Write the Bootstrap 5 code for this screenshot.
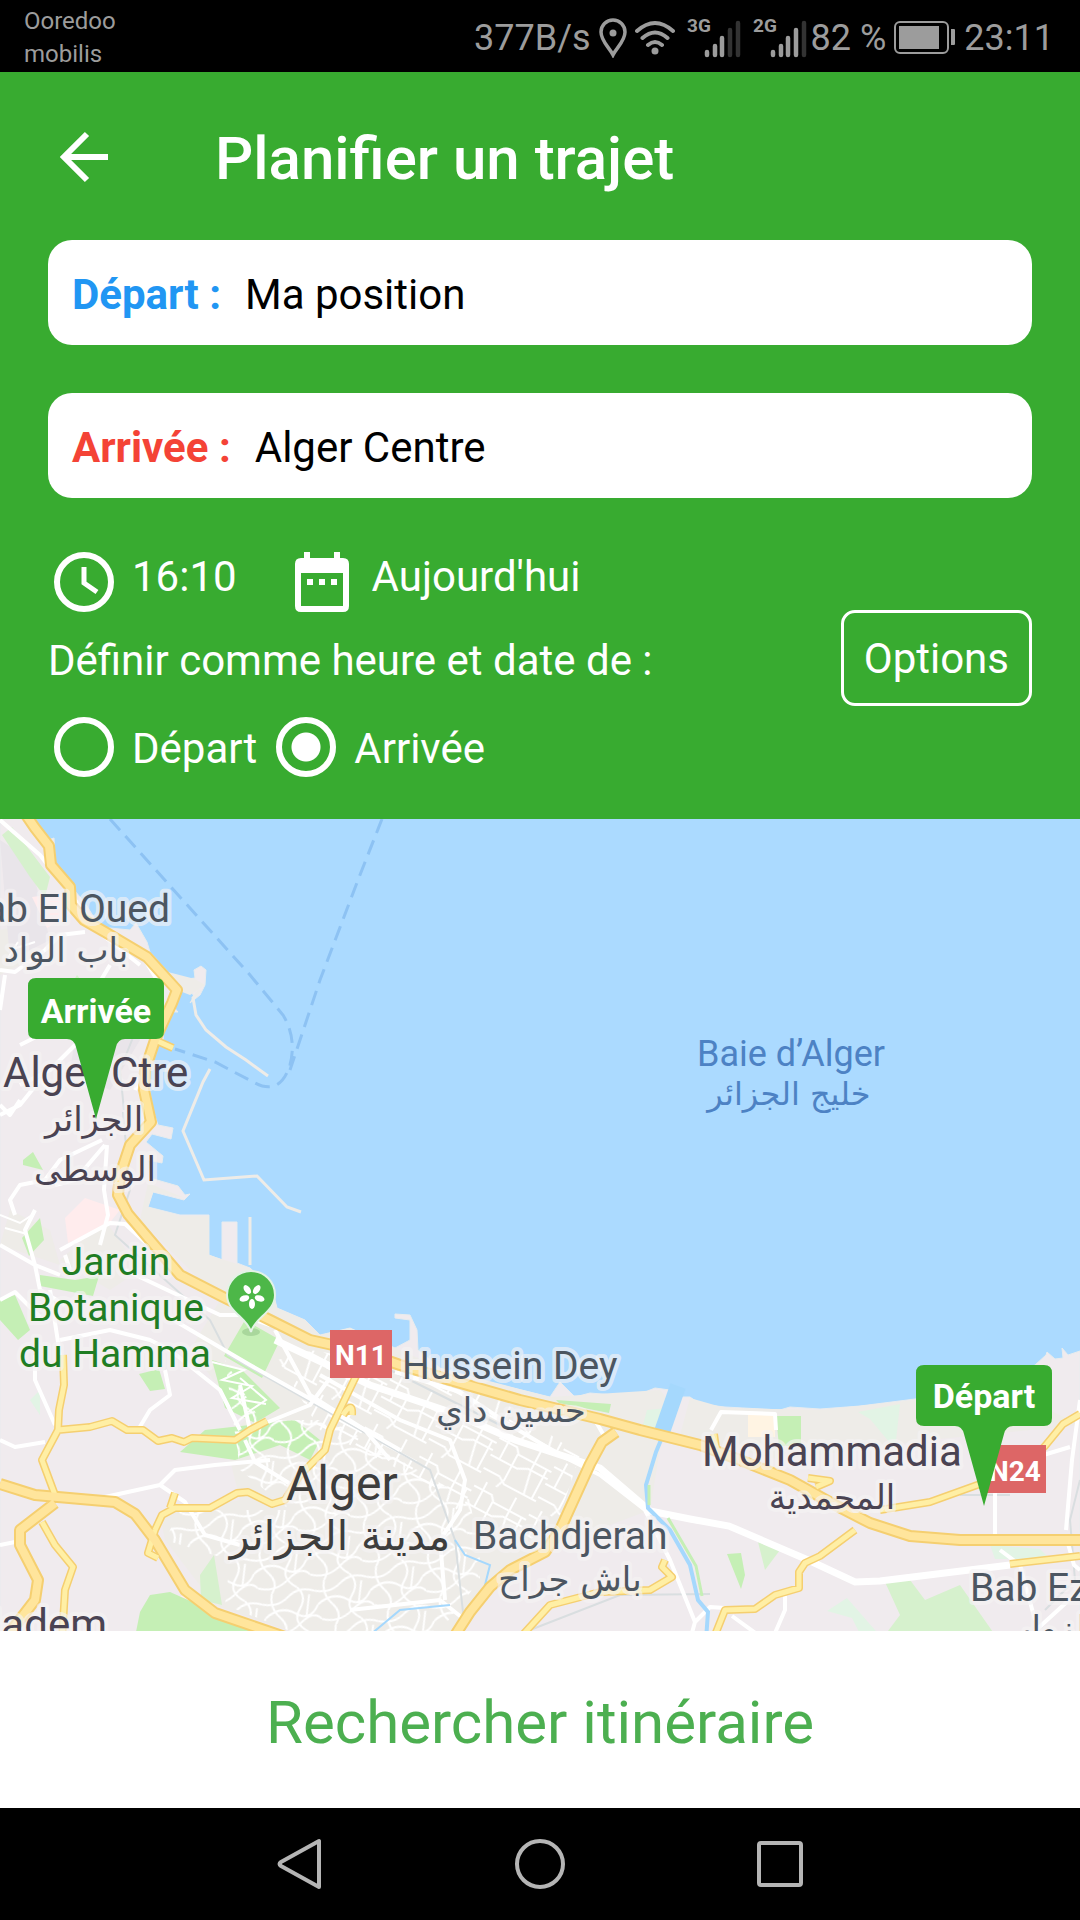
<!DOCTYPE html>
<html lang="fr">
<head>
<meta charset="utf-8">
<meta name="viewport" content="width=device-width, initial-scale=1">
<title>Planifier un trajet</title>
<link rel="stylesheet" href="https://cdn.jsdelivr.net/npm/bootstrap@5.3.0/dist/css/bootstrap.min.css">
<style>
  :root { --app-green: #38ab30; }
  body { font-family: Roboto, "Noto Sans", sans-serif; font-size: 42px; line-height: 48px; background: #000; }
  svg { display: block; flex: none; }
  .status-bar { height: 72px; color: #9c9c9c; font-size: 36px; padding: 3px 26px 0 24px; }
  .carriers { font-size: 24px; line-height: 33px; }
  .status-icons { gap: 4px; }
  .net-type { font-size: 19px; font-weight: 700; fill: #9c9c9c; }
  .planner { background: var(--app-green); padding: 48px 48px 42px; }
  .page-title { font-size: 60px; line-height: 72px; font-weight: 500; padding-top: 3px; }
  .title-row { gap: 102px; margin-bottom: 45px; padding-left: 5px; }
  .place-field { height: 105px; border-radius: 24px; padding: 5px 24px 0; gap: 24px; margin-bottom: 48px; }
  .place-field label { font-weight: 700; }
  .place-field input { outline: 0; color: #000; }
  .from-label { color: #2196f3; }
  .to-label { color: #f44336; }
  .when-row { gap: 53px; height: 72px; }
  .when-btn, .when-btn:hover { font-size: 42px; line-height: 48px; color: #fff; gap: 12px; }
  .when-btn span { padding-bottom: 10px; }
  .date-btn { gap: 18px; }
  .set-as { height: 88px; padding-bottom: 2px; }
  .mode-row { gap: 19px; padding: 11px 0 0 6px; }
  .pick { gap: 18px; }
  .pick label { padding-top: 3px; }
  .pick input { appearance: none; width: 60px; height: 60px; margin: 0; border: 6px solid #fff; border-radius: 50%; }
  .pick input:checked { background: radial-gradient(circle, #fff 14px, transparent 15px); }
  .options-btn, .options-btn:hover { border: 3px solid #fff; border-radius: 14px; margin-top: 64px; padding: 22px 20px 20px; font-size: 42px; line-height: 48px; color: #fff; }
  .map-pane { min-height: 500px; }
  .map-pane > svg { position: absolute; width: 100%; height: 100%; }
  .lbl { font-size: 39px; fill: #4c5661; stroke: #f5f3f4; stroke-opacity: .65; stroke-width: 8px; stroke-linejoin: round; paint-order: stroke; }
  .big-lbl { font-size: 42px; }
  .lbl .ar { font-family: "DejaVu Sans", sans-serif; font-size: 34px; }
  .town { fill: #4a4352; }
  .city { fill: #3d3d3d; font-size: 48px; }
  .lbl .city .ar { font-size: 41px; }
  .park-name { fill: #1f7d23; }
  .sea-name { fill: #4d82c4; stroke: none; font-size: 36px; }
  .lbl .sea-name .ar { font-size: 32px; }
  .tag { font-weight: 700; font-size: 34px; fill: #fff; text-anchor: middle; }
  .shield { font-weight: 700; font-size: 28px; fill: #fff; text-anchor: middle; }
  .search-btn, .search-btn:hover { color: #4caf50; font-size: 60px; line-height: 72px; padding: 56px 0 49px; }
  .nav-keys { height: 112px; gap: 188px; }
  .nav-keys button { width: 52px; }
</style>
</head>
<body>
<div class="min-vh-100 d-flex flex-column">

  <div class="status-bar d-flex align-items-center justify-content-between">
    <div class="carriers">Ooredoo<br>mobilis</div>
    <div class="status-icons d-flex align-items-center">
      <span class="pe-1">377B/s</span>
      <svg width="28" height="40" viewBox="0 0 28 40" fill="none" stroke="#9c9c9c" stroke-width="3.500"><path d="M14 37C10 29 2 23 2 14a12 12 0 0 1 24 0c0 9-8 15-12 23z"/><circle cx="14" cy="15" r="3.500" fill="#9c9c9c" stroke="none"/></svg>
      <svg class="ms-1" width="40" height="36" viewBox="0 0 40 36" fill="none" stroke="#9c9c9c" stroke-width="4" stroke-linecap="round"><path d="M2 11Q20-5 38 11M7.500 18Q20 7 32.500 18M13 25Q20 19 27 25"/><circle cx="20" cy="31" r="3.500" fill="#9c9c9c" stroke="none"/></svg>
      <svg class="ms-1" width="58" height="48" viewBox="0 -4 58 48"><text class="net-type" x="4" y="14">3G</text><g stroke="#9c9c9c" stroke-width="4.500" stroke-linecap="round"><path d="M24 34v3M32 28v9M39 20v17"/><path d="M47 12v25M55 5v32" stroke="#333"/></g></svg>
      <svg class="ms-1" width="58" height="48" viewBox="0 -4 58 48"><text class="net-type" x="4" y="14">2G</text><g stroke="#9c9c9c" stroke-width="4.500" stroke-linecap="round"><path d="M24 34v3M32 28v9M39 20v17M47 12v25"/><path d="M55 5v32" stroke="#333"/></g></svg>
      <span>82 %</span>
      <svg class="ms-1" width="62" height="36" viewBox="0 0 62 36"><rect x="1" y="2" width="53" height="31" rx="5" fill="none" stroke="#9c9c9c" stroke-width="2"/><path d="M5 6h40v23H5zM57 9h3q1 0 1 1v14q0 1-1 1h-3z" fill="#9c9c9c"/></svg>
      <span class="ps-1">23:11</span>
    </div>
  </div>

  <main class="flex-grow-1 d-flex flex-column bg-white">
    <form class="planner text-white">
      <div class="title-row d-flex align-items-center">
        <button type="button" class="btn p-0 border-0" aria-label="Retour"><svg width="60" height="72" viewBox="0 0 60 72" fill="none" stroke="#fff" stroke-width="6"><path d="M55 35H12M34 12L11 35l23 23"/></svg></button>
        <h1 class="page-title m-0">Planifier un trajet</h1>
      </div>
      <div class="place-field d-flex align-items-center bg-white">
        <label class="from-label" for="from">Départ :</label>
        <input id="from" class="border-0 p-0 flex-fill bg-transparent" type="text" value="Ma position">
      </div>
      <div class="place-field d-flex align-items-center bg-white">
        <label class="to-label" for="to">Arrivée :</label>
        <input id="to" class="border-0 p-0 flex-fill bg-transparent" type="text" value="Alger Centre">
      </div>
      <div class="d-flex align-items-start justify-content-between">
        <div>
          <div class="when-row d-flex">
            <button type="button" class="when-btn btn p-0 border-0 d-flex align-items-center">
              <svg width="72" height="72" viewBox="0 0 72 72" fill="none" stroke="#fff"><circle cx="36" cy="36" r="27" stroke-width="6"/><path d="M36 21v16l13 9" stroke-width="5"/></svg>
              <span>16:10</span>
            </button>
            <button type="button" class="when-btn date-btn btn p-0 border-0 d-flex align-items-center">
              <svg width="64" height="72" viewBox="0 0 64 72" fill="#fff"><path fill-rule="evenodd" d="M14 6h6v6h24V6h6v6h3q6 0 6 6v42q0 6-6 6H11q-6 0-6-6V18q0-6 6-6h3zM11 27v33h42V27z"/><path d="M17 33h6v6h-6zM29 33h6v6h-6zM41 33h6v6h-6z"/></svg>
              <span>Aujourd'hui</span>
            </button>
          </div>
          <div class="set-as d-flex align-items-center">Définir comme heure et date de :</div>
          <div class="mode-row d-flex align-items-center">
            <div class="pick d-flex align-items-center"><input type="radio" name="mode" id="m-from"><label for="m-from">Départ</label></div>
            <div class="pick d-flex align-items-center"><input type="radio" name="mode" id="m-to" checked><label for="m-to">Arrivée</label></div>
          </div>
        </div>
        <button type="button" class="btn options-btn">Options</button>
      </div>
    </form>

    <div class="map-pane position-relative flex-grow-1 overflow-hidden">
      <svg viewBox="0 819 1080 812" preserveAspectRatio="xMidYMid slice" role="img" aria-label="Carte d'Alger">
        <defs>
          <pattern id="lanes" width="62" height="54" patternUnits="userSpaceOnUse" patternTransform="rotate(28)">
            <path d="M0 9h20l5 6h37M0 28h30l10-5h22M0 43h18l8 5h36M10 0v28M24 15v29l-4 10M43 0v23l5 25M57 15v33" fill="none" stroke="#fff" stroke-width="2"/>
          </pattern>
          <pattern id="alleys" width="54" height="46" patternUnits="userSpaceOnUse" patternTransform="rotate(-15)">
            <path d="M0 8q14 7 27-1t27 1M0 22q18-9 30 3t24-3M0 37q16 9 32-1t22 1M12 0q-6 13 2 25t-2 21M38 0q8 11-3 22t3 24M48 10l-8 20" fill="none" stroke="#fff" stroke-width="2"/>
          </pattern>
          <g id="avenues">
            <path d="M63 1355L64 1385 59 1410 58 1430 42 1460 55 1495M58 1430L90 1427 112 1421 127 1430 143 1430 158 1441 172 1438 184 1442 192 1438 235 1440 250 1430 267 1421M357 1374L330 1430 325 1450 300 1475 285 1500 272 1504 248 1492 237 1493 210 1508 175 1508 162 1515 155 1530M175 1493L170 1508M42 1522L55 1545 73 1567 65 1590 62 1640M155 1530L148 1553 158 1558M518 1640L550 1605 600 1592 650 1590 672 1577 662 1567 665 1560M1080 1414L1063 1424 1045 1446 1020 1472 980 1484 930 1502 880 1510M855 1530L820 1556 805 1563 799 1572 799 1588 775 1595 755 1609 725 1610 715 1635M1010 1564L1080 1556M155 1040L173 1048M808 1478l22 3-14 6M714 1434l2 14M343 1415q10-15 9 0"/>
          </g>
          <g id="motorways">
            <path d="M0 1484L35 1495 115 1502 135 1514 155 1540 185 1590 215 1613 285 1637M55 1503L20 1530 20 1545 38 1580 35 1600 8 1635"/>
            <path d="M24 812L35 828 49 846 51 865 70 887 71 905 84 920 105 932 147 957 177 990 172 1003 155 1040 145 1070 144 1090 151 1122 130 1145 120 1175 118 1195 128 1214 150 1240 180 1275 225 1298 270 1320 310 1340 360 1351 400 1365 450 1380 520 1400 600 1419 640 1430 700 1445 740 1460 790 1480 835 1505 870 1523 910 1536 960 1540 1080 1540M616 1432L602 1442 590 1464 560 1530 545 1552 510 1570 490 1587 470 1612 452 1640"/>
          </g>
        </defs>
        <rect y="819" width="1080" height="812" fill="#abdaff"/>
        <path fill="#f0ebee" stroke="#e8ecee" d="M0 819H30L48 840 54 838 55 860 52 868 70 885 85 903 100 927 130 930 136 923 147 942 150 952 168 972 178 980 195 978 194 970 201 966 206 970 205 985 200 995 190 1003 194 996 188 988H180L172 1005 178 1012 165 1012 163 1040 155 1050 148 1080 153 1110 158 1125 173 1128 171 1139 152 1134 146 1142 163 1156 162 1163 148 1160 150 1178 178 1186 185 1195 190 1194 184 1200 153 1192 148 1207 180 1215H209V1255L222 1260V1222H237V1263L250 1268 272 1288 277 1308 305 1320 320 1335 350 1328 395 1348 410 1340 410 1320 395 1318V1314L410 1315 417 1330 418 1350 440 1368 480 1380 550 1397 560 1382 575 1397 590 1393 625 1396 640 1394 655 1388 670 1390 674 1397H690L700 1404 725 1407 780 1410 790 1407 820 1409 860 1406 915 1399 1000 1385 1035 1365 1046 1355 1047 1352 1055 1359 1063 1358 1062 1348 1068 1355 1080 1351V1640H0Z"/>
        <g fill="#eeece8">
          <path d="M147 957L168 972 195 979 205 985 190 995 177 990zM148 1183L185 1198 153 1192 148 1207 180 1216H209V1255L250 1268 272 1288 277 1308 305 1320 320 1335 350 1328 395 1348 440 1368 550 1397 660 1390 668 1400 650 1510 570 1540 500 1570 450 1631H290L215 1605 165 1540 160 1515 240 1500 225 1440 245 1420 190 1350 220 1300 140 1220z"/>
          <path d="M690 1398L725 1408 820 1410 915 1400 1000 1386 1080 1425 930 1440 780 1460 680 1435zM0 930L40 920 30 960 0 975zM10 1210l40 20 10 35-60-20zM60 1260l45-40 35 50-30 20z"/>
        </g>
        <path fill="#e9e5ea" d="M0 840l30 20 20 80-40 20zM80 1010l40-10 20 40-30 50-40-20z"/>
        <path fill="#ffeced" d="M32 897l30-4 10 20-25 15zM65 1218l20-20 35 12-12 15-40 18zM150 1605l35-10 20 20v20h-67z"/>
        <path fill="#fff4e3" d="M748 1412h27v25h-27z"/>
        <path fill="#c5efb5" d="M22 1238l18-20 4 22-15 16zM40 1275l35 5 24-4-6 20-53-10zM0 1300l15-5 15 35-12 10L0 1320zM139 1374l20-5 6 20-15 2zM245 1320l35 20-18 38-38-22zM212 1360l30 10 38 38-25 15-30-15zM205 1430l45-5 45-5 25 20-10 20-30-15-45 15-55-8zM150 1595l20-3 45 20 60 25H135l5-25zM23 1160l10-8 10 18-20-5zM556 1400l55 4-2 9-50-10zM776 1416h25v30h-22zM727 1554l14-1 4 22-4 14z"/>
        <path fill="#d6f1cd" d="M2 835l10-8 38 50-5 20-15-20zM200 1575l14-20 8 50-21-5zM885 1582l25-2 15 20 35-15 35 50H885l15-20zM758 1542l22 8-15 20zM62 1000l15-25 8 10z"/>
        <path fill="#e2f4e5" d="M30 1400l10-10v25zM858 1412l42-8-5 45-25-30zM647 1410l20-2-6 22-18-5zM827 1611l20-13 35 40h-20l-10-20zM990 1545l50 4 10 10h-55z"/>
        <path fill="url(#lanes)" d="M278 1360L310 1350 370 1360 500 1400 580 1455 560 1515 530 1540 470 1520 420 1480 320 1430z"/>
        <path fill="url(#alleys)" d="M225 1360L260 1420 330 1420 470 1500 480 1560 480 1580 440 1631H290L225 1605 230 1560 165 1540 180 1510 290 1510 240 1470z"/>
        <g fill="none" stroke="#d9dee0" stroke-width="2">
          <path d="M123 1112L130 1190 115 1235 210 1320 228 1355 360 1430 430 1470 455 1540 465 1630M140 1020L120 1070 124 1110M380 1365L500 1425M530 1630L620 1595 710 1594M960 1495h50M1080 1480l-10 40 5 60-30 30"/>
        </g>
        <g fill="none" stroke="#fff" stroke-width="4" stroke-linejoin="round">
          <path d="M0 820L40 855 75 900 95 928M0 970L15 972 45 950 60 935 85 932M0 1010L5 975M110 965l-30 50-60 30M145 960l12 20-8 20M75 1045L50 1070 20 1085M0 1115L20 1105 40 1080 55 1095M20 1100L10 1115 0 1105M102 1140L60 1160 45 1180 20 1185 10 1200 15 1215M105 1145L75 1180 55 1185M107 1145L104 1190 108 1215 100 1245M0 1245L35 1265 60 1275M35 1210l-10 20 10 35 5 25 25 15M60 1250L110 1223 125 1224 165 1260M65 1255l5 15M125 1270L220 1315 240 1315 270 1325M0 1300l15-8 25 25M60 1355L50 1290M35 1355L35 1380 55 1425M60 1340L110 1330 150 1340 170 1350 220 1390 240 1430M165 1370l5 25-20 15-12 20M0 1440l15 7 30-5M105 1497L160 1485 175 1470 215 1465 270 1460M160 1485L185 1502 205 1535 240 1545M245 1440l10 22 45 28M240 1385L250 1430M268 1422L310 1405 330 1378M275 1330L310 1395 365 1430 390 1460M0 1545l15-3"/>
          <path d="M165 1315L250 1365 330 1410 400 1450M320 1375L400 1420 450 1440 465 1480 460 1510 440 1540 445 1600M395 1372L460 1392 510 1425 560 1455 600 1475 645 1510 700 1522 M595 1420L603 1434M645 1510L670 1560 695 1622 690 1640M695 1622L710 1607 725 1608M440 1600L465 1620M350 1610L440 1600M785 1596L785 1610 772 1640M732 1616L765 1640M711 1430L721 1412 775 1414 776 1430M995 1490V1540M1066 1530L1072 1460 1080 1400M1020 1462L1070 1447M1000 1550L1020 1565 1035 1620M1067 1540l7 25 6 5M1035 1631L1080 1590M90 925L140 965M135 1090l15-40"/>
        </g>
        <path d="M0 1215l20 8 12-8M5 1228l22 6M80 1268l30 8M212 1362l32 8-22 10 30 6-20 12 34 6M240 1378l26 22-18 12M10 950l25-8M8 958l10-16" fill="none" stroke="#fff" stroke-width="2"/>
        <path d="M275 1340L370 1385 450 1412 515 1440 600 1468 650 1511 690 1519 729 1526 808 1560 855 1582 880 1581 1010 1565" fill="none" stroke="#fff" stroke-width="7"/>
        <path d="M200 990L193 998 196 1015 206 1030 226 1047 246 1060 268 1076M210 1069L203 1082 183 1131 204 1180 257 1176 287 1207 301 1212M250 1217V1265" fill="none" stroke="#eeece8" stroke-width="3"/>
        <g fill="none" stroke="#a5d8fd" stroke-width="4"><path d="M681 1392L656 1452 646 1485 648 1508 670 1530 690 1565 698 1600 708 1612 706 1640"/><path d="M678 1386L662 1432" stroke-width="16"/><path d="M455 1540L465 1555 490 1565 480 1605 467 1620M370 1635L400 1610 450 1605" stroke-width="2"/></g>
        <path d="M649 1485v20M668 1518l28 48 6 30" fill="none" stroke="#c5efb5" stroke-width="3"/>
        <g fill="none" stroke-linejoin="round">
          <use href="#avenues" stroke="#f5cf70" stroke-width="8"/>
          <use href="#motorways" stroke="#f5cf70" stroke-width="12"/>
          <use href="#avenues" stroke="#ffefa5" stroke-width="5"/>
          <use href="#motorways" stroke="#ffe59c" stroke-width="8"/>
        </g>
        <path d="M110 819L250 975 283 1015Q297 1038 290 1065 280 1096 255 1083L215 1062 175 1049M382 819L358 880 320 980 290 1070" fill="none" stroke="#8dc2f3" stroke-width="3" stroke-dasharray="15 8"/>

        <g class="lbl">
          <text x="170" y="922" text-anchor="end">Bab El Oued</text>
          <text class="ar" x="66" y="962" text-anchor="middle">باب الواد</text>
          <g class="town"><text class="big-lbl" x="3" y="1087">Alger Ctre</text>
          <text class="ar" x="94" y="1131" text-anchor="middle">الجزائر</text>
          <text class="ar" x="95" y="1181" text-anchor="middle">الوسطى</text></g>
          <g class="park-name" text-anchor="middle"><text x="116" y="1275">Jardin</text><text x="116" y="1321">Botanique</text><text x="115" y="1367">du Hamma</text></g>
          <text x="402" y="1379">Hussein Dey</text>
          <text class="ar" x="511" y="1422" text-anchor="middle">حسين داي</text>
          <g class="city"><text x="286" y="1500">Alger</text>
          <text class="ar" x="340" y="1550" text-anchor="middle">مدينة الجزائر</text></g>
          <text x="473" y="1549">Bachdjerah</text>
          <text class="ar" x="570" y="1591" text-anchor="middle">باش جراح</text>
          <g class="town"><text class="big-lbl" x="702" y="1466">Mohammadia</text>
          <text class="ar" x="832" y="1509" text-anchor="middle">المحمدية</text>
          <text class="big-lbl" x="107" y="1639" text-anchor="end">Hadem</text></g>
          <text x="970" y="1601">Bab Ezzouar</text>
          <text class="ar" x="1015" y="1640">باب الزوار</text>
          <g class="sea-name"><text x="697" y="1066">Baie d’Alger</text><text class="ar" x="789" y="1105" text-anchor="middle">خليج الجزائر</text></g>
        </g>

        <path fill="#d66" d="M330 1330h62v48h-62zM984 1445h62v48h-62z"/>
        <text class="shield" x="361" y="1365">N11</text>
        <text class="shield" x="1015" y="1481">N24</text>

        <ellipse cx="251" cy="1332" rx="9" ry="4" fill="#a9d79c"/>
        <path d="M251 1332C248 1318 227 1312 227 1295a24 24 0 0 1 48 0c0 17-21 23-24 37z" fill="#4db748" stroke="#e3f3e6" stroke-width="2"/>
        <g fill="#fff" transform="translate(252 1296)"><g id="petal"><ellipse cy="8" rx="3" ry="5"/></g><use href="#petal" transform="rotate(72)"/><use href="#petal" transform="rotate(144)"/><use href="#petal" transform="rotate(216)"/><use href="#petal" transform="rotate(288)"/></g>

        <g id="flag" fill="#38ab30"><path d="M36 978h120q8 0 8 8v45q0 8-8 8h-31q-7 0-9 8L96 1119 76 1047q-2-8-9-8H36q-8 0-8-8v-45q0-8 8-8z"/></g>
        <use href="#flag" x="888" y="387"/>
        <text class="tag" x="96" y="1023">Arrivée</text>
        <text class="tag" x="984" y="1408">Départ</text>
      </svg>
    </div>

    <button type="button" class="btn search-btn rounded-0 border-0 w-100 bg-white">Rechercher itinéraire</button>
  </main>

  <nav class="nav-keys d-flex align-items-center justify-content-center bg-black" aria-label="Système">
    <button class="btn p-0 border-0" aria-label="Précédent"><svg width="52" height="52" viewBox="0 0 52 52" fill="none" stroke="#b5b5b5" stroke-width="4" stroke-linejoin="round"><path d="M45 3v46L7 28q-3-2 0-4z"/></svg></button>
    <button class="btn p-0 border-0" aria-label="Accueil"><svg width="52" height="52" viewBox="0 0 52 52" fill="none" stroke="#b5b5b5" stroke-width="4"><circle cx="26" cy="26" r="23"/></svg></button>
    <button class="btn p-0 border-0" aria-label="Récents"><svg width="52" height="52" viewBox="0 0 52 52" fill="none" stroke="#b5b5b5" stroke-width="4"><rect x="5" y="5" width="42" height="42" rx="2"/></svg></button>
  </nav>
</div>
<script src="https://cdn.jsdelivr.net/npm/bootstrap@5.3.0/dist/js/bootstrap.bundle.min.js"></script>
</body>
</html>
